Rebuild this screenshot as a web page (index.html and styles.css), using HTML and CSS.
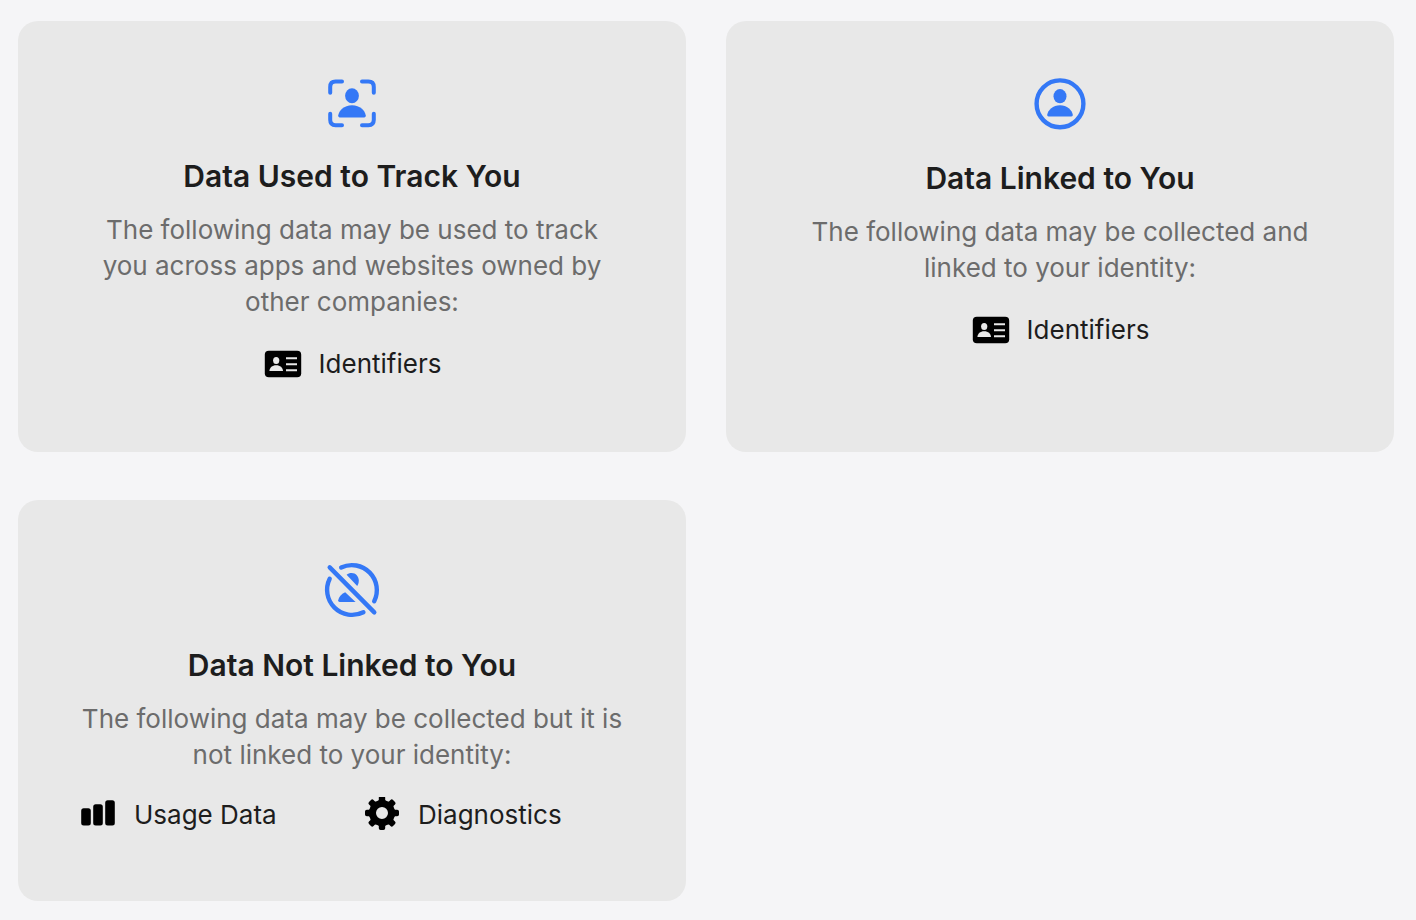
FILE: index.html
```html
<!DOCTYPE html>
<html lang="en">
<head>
<meta charset="utf-8">
<meta name="viewport" content="width=device-width, initial-scale=1">
<title>App Privacy</title>
<link rel="stylesheet" href="styles.css">
</head>
<body>
<main class="cards">
  <section class="card">
    <svg class="card-icon" width="88" height="86" viewBox="0 0 88 86" aria-hidden="true">
      <g fill="none" stroke="currentColor" stroke-width="4" stroke-linecap="round">
        <path d="M22.200 31.800V26Q22.200 20.600 27.600 20.600H34M54 20.600H60.400Q65.800 20.600 65.800 26V31.800M65.800 52.800V58.800Q65.800 64.200 60.400 64.200H54M34 64.200H27.600Q22.200 64.200 22.200 58.800V52.800"/>
      </g>
      <ellipse cx="44" cy="34.700" rx="6.900" ry="7.500"/>
      <path d="M31.600 56.400Q30 56.400 30.200 54.600C31 49.400 36 44.200 44 44.200S57 49.400 57.800 54.600Q58 56.400 56.400 56.400Z"/>
    </svg>
    <h2 class="card-title">Data Used to Track You</h2>
    <p class="card-text">The following data may be used to track you across apps and websites owned by other companies:</p>
    <ul class="items">
      <li class="item">
        <svg class="item-icon" width="40" height="36" viewBox="0 0 40 36" aria-hidden="true">
          <rect x="1.8" y="4.8" width="36.4" height="26.400" rx="4"/>
          <g class="cutout">
            <ellipse cx="13.200" cy="14.6" rx="3.100" ry="3.5"/>
            <path d="M6.400 25C6.600 21.600 9.200 19.200 13.200 19.200S19.800 21.600 20 25Z"/>
            <path d="M23 11.200h11v2H23zM23 17.200h11v2H23zM23 23.200h11v2H23z"/>
          </g>
        </svg>
        <span>Identifiers</span>
      </li>
    </ul>
  </section>

  <section class="card">
    <svg class="card-icon" width="88" height="88" viewBox="0 0 88 88" aria-hidden="true">
      <circle cx="44" cy="42.800" r="23.400" fill="none" stroke="currentColor" stroke-width="4.400"/>
      <ellipse cx="44" cy="35.200" rx="6.500" ry="7.100"/>
      <path d="M32.600 55.400Q31 55.400 31.200 53.800C32 49 37 44.200 44 44.200S56 49 56.800 53.800Q57 55.400 55.400 55.400Z"/>
    </svg>
    <h2 class="card-title">Data Linked to You</h2>
    <p class="card-text">The following data may be collected and linked to your identity:</p>
    <ul class="items">
      <li class="item">
        <svg class="item-icon" width="40" height="36" viewBox="0 0 40 36" aria-hidden="true">
          <rect x="1.8" y="4.8" width="36.4" height="26.400" rx="4"/>
          <g class="cutout">
            <ellipse cx="13.200" cy="14.6" rx="3.100" ry="3.5"/>
            <path d="M6.400 25C6.600 21.600 9.200 19.200 13.200 19.200S19.800 21.600 20 25Z"/>
            <path d="M23 11.200h11v2H23zM23 17.200h11v2H23zM23 23.200h11v2H23z"/>
          </g>
        </svg>
        <span>Identifiers</span>
      </li>
    </ul>
  </section>

  <section class="card">
    <svg class="card-icon" width="88" height="96" viewBox="0 0 88 96" aria-hidden="true">
      <g fill="none" stroke="currentColor" stroke-width="4.400" stroke-linecap="round">
        <path d="M33.200 27.500A25 25 0 0 1 66.200 61.300M55.400 72.200A25 25 0 0 1 21.700 38.800"/>
        <path d="M21.700 27.400L66.300 72.400"/>
      </g>
      <path d="M38.600 34.800C40 33.600 41.600 33 43.600 33C47.800 33 50.800 36.400 50.800 40.800C50.800 42.800 50.200 44.600 49.200 46Z"/>
      <path d="M37.200 52.200L47.600 62H31.600Q30 62 30.200 60.200C30.700 57 33.200 54 37.200 52.200Z"/>
    </svg>
    <h2 class="card-title">Data Not Linked to You</h2>
    <p class="card-text">The following data may be collected but it is not linked to your identity:</p>
    <ul class="items items-grid">
      <li class="item">
        <svg class="item-icon" width="40" height="36" viewBox="0 0 40 36" aria-hidden="true">
          <rect x="3.200" y="11.300" width="9.600" height="17.200" rx="2.500"/>
          <rect x="15.200" y="7.300" width="9.600" height="21.200" rx="2.500"/>
          <rect x="27.200" y="3.300" width="9.600" height="25.200" rx="2.500"/>
        </svg>
        <span>Usage Data</span>
      </li>
      <li class="item">
        <svg class="item-icon" width="40" height="36" viewBox="0 0 40 36" aria-hidden="true">
          <g transform="translate(20 16)">
            <circle r="9.500" fill="none" stroke="currentColor" stroke-width="7"/>
            <g id="teeth">
              <path id="tooth" d="M-4.200 -11.500L-3.200 -13V-15.200Q-3.200 -17 -1.400 -17H1.400Q3.200 -17 3.200 -15.200V-13L4.200 -11.500Z"/>
              <use href="#tooth" transform="rotate(45)"/>
              <use href="#tooth" transform="rotate(90)"/>
              <use href="#tooth" transform="rotate(135)"/>
            </g>
            <use href="#teeth" transform="rotate(180)"/>
          </g>
        </svg>
        <span>Diagnostics</span>
      </li>
    </ul>
  </section>
</main>
</body>
</html>
```
FILE: styles.css
```css
* {
  box-sizing: border-box;
}

body {
  margin: 0;
  background: #f5f5f7;
  color: #1d1d1d;
  font-family: Inter, "Liberation Sans", sans-serif;
}

.cards {
  display: grid;
  grid-template-columns: repeat(2, minmax(0, 1fr));
  gap: 48px 40px;
  padding: 21px 22px 19px 18px;
}

.card {
  display: flex;
  flex-direction: column;
  align-items: center;
  padding: 40px 60px 0;
  border-radius: 20px;
  background: #e8e8e8;
  text-align: center;
}

.card-icon {
  color: #3478f6;
  fill: currentColor;
}

.card-title {
  margin: 9px 0 16px;
  font-size: 30px;
  font-weight: 600;
  line-height: 40px;
}

.card-text {
  max-width: 542px;
  margin: 0;
  color: #6c6c6c;
  font-size: 26px;
  line-height: 36px;
}

.items {
  margin: 26px 0 70px;
  padding: 0;
  list-style: none;
}

.items-grid {
  display: grid;
  grid-template-columns: repeat(2, minmax(0, 1fr));
  column-gap: 20px;
  width: 100%;
  margin: 24px 0 68px;
}

.item {
  display: flex;
  align-items: center;
  gap: 16px;
  font-size: 26px;
  line-height: 36px;
}

.item-icon {
  flex: none;
  color: #000;
  fill: currentColor;
}

.cutout {
  fill: #e8e8e8;
}
```
